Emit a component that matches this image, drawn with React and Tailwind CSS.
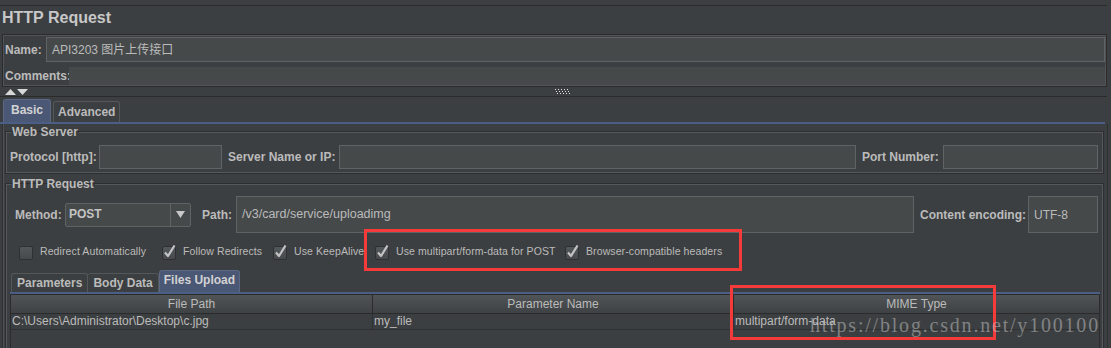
import React from "react";

const FONT = { fontFamily: "'Liberation Sans', 'Noto Sans CJK SC', Arial, sans-serif" };

const Checkbox = ({ checked }) => (
  <svg width="16" height="16" viewBox="0 0 16 16" className="shrink-0">
    <defs>
      <linearGradient id="cbg" x1="0" y1="0" x2="0" y2="1">
        <stop offset="0" stopColor="#53585a" />
        <stop offset="1" stopColor="#45494b" />
      </linearGradient>
    </defs>
    <rect x="1.5" y="2.5" width="13" height="13" rx="1.5" fill="url(#cbg)" stroke="#2e3031" />
    {checked && (
      <path d="M4 8.5 L7 12 L13.5 1.5" fill="none" stroke="#c4c4c4" strokeWidth="2.2" strokeLinejoin="round" />
    )}
  </svg>
);

const CheckItem = ({ checked, label, w }) => (
  <div className={`flex items-center gap-[6px] ${w}`}>
    <Checkbox checked={checked} />
    <span className="text-[10.5px] tracking-[0.1px] text-[#bbbbbb] whitespace-nowrap">{label}</span>
  </div>
);

const Field = ({ className = "", children }) => (
  <div className={`bg-[#45494a] border border-[#606364] flex items-center px-[5px] text-[12px] text-[#bbbbbb] ${className}`}>
    {children}
  </div>
);

const Label = ({ className = "", children }) => (
  <div className={`font-bold text-[12px] text-[#bbbbbb] shrink-0 ${className}`}>{children}</div>
);

const Group = ({ title, className = "", children }) => (
  <fieldset className={`border border-[#56595b] shadow-[0_0_0_1px_#2c2e2f] ${className}`}>
    <legend className="ml-[4px] px-[1px] h-[16px] leading-[16px] font-bold text-[12px] text-[#bbbbbb]">{title}</legend>
    {children}
  </fieldset>
);

export default function App() {
  return (
    <div className="w-[1111px] h-[348px] bg-[#3c3f41] overflow-hidden relative text-[#bbbbbb]" style={FONT}>
      {/* top line */}
      <div className="h-[6px] w-[1107px] border-b border-[#2b2b2b]" />

      {/* title */}
      <div className="h-[28px] leading-[24px] pl-[2px] text-[16px] font-bold text-[#c8c8c8]">HTTP Request</div>

      {/* name / comments */}
      <div className="ml-[2px] w-[1105px] border border-[#2b2b2b] shadow-[inset_0_0_0_1px_#505456] pt-[2px] pb-[1px]">
        <div className="flex items-center h-[25px]">
          <Label className="w-[43px] pl-[2px]">Name:</Label>
          <Field className="flex-1 h-[25px] mr-[1px]">API3203 图片上传接口</Field>
        </div>
        <div className="flex items-center h-[18px] mt-[5px]">
          <Label className="w-[66px] pl-[2px]">Comments:</Label>
          <div className="flex-1 h-[18px] bg-[#45494a] mr-[1px]" />
        </div>
      </div>

      {/* splitter */}
      <div className="h-[10px] w-[1107px] border-b border-[#2b2b2b] relative flex items-center">
        <svg width="24" height="6" viewBox="0 0 24 6" className="ml-[5px]">
          <path d="M0 6 L5.5 0 L11 6 Z" fill="#d8d8d8" />
          <path d="M12 0 L23 0 L17.5 6 Z" fill="#d8d8d8" />
        </svg>
        <svg width="16" height="5" viewBox="0 0 16 5" className="ml-[526px]">
          {[0, 3, 6, 9, 12].map((x) => (
            <g key={x} fill="#e0e0e0">
              <rect x={x} y="0" width="1" height="1" />
              <rect x={x + 1} y="2" width="1" height="1" />
              <rect x={x + 2} y="4" width="1" height="1" />
            </g>
          ))}
        </svg>
      </div>

      {/* main tabs */}
      <div className="flex items-end h-[25px] pl-[3px] gap-[2px]">
        <div className="h-[23px] px-[7px] bg-[#4a5775] border border-b-0 border-[#5b6783] rounded-t-[3px] font-bold text-[12px] leading-[20px] text-[#d2d2d2]">
          Basic
        </div>
        <div className="h-[21px] px-[4px] border border-b-0 border-[#555859] rounded-t-[3px] font-bold text-[12px] leading-[21px] text-[#bbbbbb]">
          Advanced
        </div>
      </div>
      <div className="w-[1105px] h-[2px] bg-[#4b5e86]" />

      {/* tab content */}
      <div className="ml-[2px] w-[1106px] h-[230px] border-l border-r border-[#2e3031] shadow-[inset_1px_0_0_#4f5355]">
        <Group title="Web Server" className="ml-[3px] w-[1097px] pb-[3px]">
          <div className="flex items-center pt-[5px] pl-[3px]">
            <Label className="w-[89px]">Protocol [http]:</Label>
            <Field className="w-[123px] h-[24px]" />
            <Label className="w-[111px] ml-[6px]">Server Name or IP:</Label>
            <Field className="w-[517px] h-[24px]" />
            <Label className="w-[81px] ml-[6px]">Port Number:</Label>
            <Field className="w-[155px] h-[24px]" />
          </div>
        </Group>

        <Group title="HTTP Request" className="ml-[3px] mt-[3px] w-[1097px] h-[200px]">
          <div className="flex items-center h-[37px] mt-[4px] pl-[8px]">
            <Label className="w-[50px]">Method:</Label>
            <div className="w-[126px] h-[24px] flex bg-[#45494a] border border-[#606364] rounded-[2px] text-[12px] font-bold text-[#c4c4c4]">
              <div className="flex-1 pl-[3px] leading-[20px] border-r border-[#606364]">POST</div>
              <div className="w-[19px] flex items-center justify-center">
                <svg width="9" height="7" viewBox="0 0 9 7">
                  <path d="M0 0 L9 0 L4.5 7 Z" fill="#c8c8c8" />
                </svg>
              </div>
            </div>
            <Label className="w-[34px] ml-[11px]">Path:</Label>
            <Field className="w-[678px] h-[37px] !text-[12.5px]">/v3/card/service/uploadimg</Field>
            <Label className="w-[108px] ml-[6px]">Content encoding:</Label>
            <Field className="w-[70px] h-[37px]">UTF-8</Field>
          </div>

          <div className="flex items-center h-[20px] mt-[9px] pl-[11px]">
            <CheckItem checked={false} label="Redirect Automatically" w="w-[143px]" />
            <CheckItem checked label="Follow Redirects" w="w-[111px]" />
            <CheckItem checked label="Use KeepAlive" w="w-[102px]" />
            <CheckItem checked label="Use multipart/form-data for POST" w="w-[190px]" />
            <CheckItem checked label="Browser-compatible headers" w="w-[160px]" />
          </div>

          {/* inner tabs */}
          <div className="flex items-end h-[22px] mt-[8px] pl-[4px]">
            <div className="h-[19px] px-[5px] border border-b-0 border-[#555859] rounded-t-[3px] font-bold text-[12px] leading-[19px]">
              Parameters
            </div>
            <div className="h-[19px] px-[5px] border border-b-0 border-l-0 border-[#555859] rounded-t-[3px] font-bold text-[12px] leading-[19px]">
              Body Data
            </div>
            <div className="h-[22px] px-[4px] bg-[#4a5775] border border-b-0 border-[#5b6783] rounded-t-[3px] font-bold text-[12px] leading-[18px] text-[#d2d2d2]">
              Files Upload
            </div>
          </div>
          <div className="ml-[3px] w-[1090px] h-[2px] bg-[#4b5e86]" />

          {/* table */}
          <div className="ml-[3px] w-[1090px] border border-[#2b2b2b] h-[60px]">
            <div className="flex h-[19px] bg-gradient-to-b from-[#505456] to-[#3f4244] border-b border-[#2b2b2b] text-[12px] text-[#bbbbbb]">
              <div className="w-[362px] text-center leading-[18px] border-r border-[#2b2b2b]">File Path</div>
              <div className="w-[361px] text-center leading-[18px] border-r border-[#2b2b2b]">Parameter Name</div>
              <div className="flex-1 text-center leading-[18px]">MIME Type</div>
            </div>
            <div className="flex h-[16px] border-b border-[#2e3031] text-[12px] text-[#bbbbbb]">
              <div className="w-[362px] pl-[1px] leading-[15px] border-r border-[#2e3031]">C:\Users\Administrator\Desktop\c.jpg</div>
              <div className="w-[361px] pl-[1px] leading-[15px] border-r border-[#2e3031]">my_file</div>
              <div className="flex-1 pl-[1px] leading-[15px]">multipart/form-data</div>
            </div>
          </div>
        </Group>
      </div>

      {/* annotations */}
      <div className="absolute left-[364px] top-[229px] w-[378px] h-[42px] border-[3px] border-[#f53a3a]" />
      <div className="absolute left-[730px] top-[285px] w-[266px] h-[55px] border-[3px] border-[#f53a3a]" />
      <div
        className="absolute left-[810px] top-[310px] text-[20px] tracking-[1.8px] text-[#c8c8c8]/50 whitespace-nowrap"
        style={{ fontFamily: "'Liberation Serif', serif" }}
      >
        https://blog.csdn.net/y100100
      </div>
    </div>
  );
}
